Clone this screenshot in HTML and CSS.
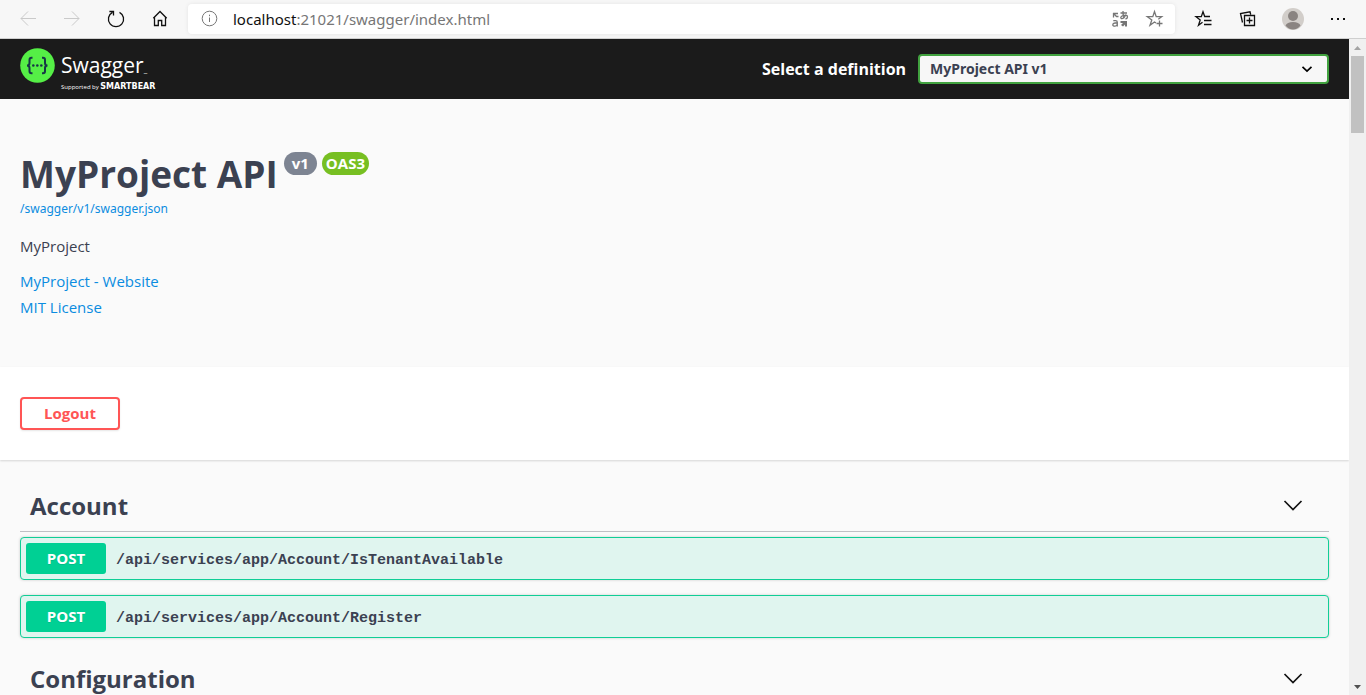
FILE: index.html
```html
<!DOCTYPE html>
<html lang="en">
<head>
<meta charset="utf-8">
<title>Swagger UI</title>
<link rel="stylesheet" href="styles.css">
</head>
<body>
<header class="browser">
  <nav class="nav-buttons" aria-label="Browser">
    <button class="tool tool-off" aria-label="Back"><svg width="20" height="20" viewBox="0 0 20 20"><path d="M18 9.500H3M10 2.500L3 9.500L10 16.500"/></svg></button>
    <button class="tool tool-off" aria-label="Forward"><svg width="20" height="20" viewBox="0 0 20 20"><path d="M2 9.500H17M10 2.500L17 9.500L10 16.500"/></svg></button>
    <button class="tool" aria-label="Refresh"><svg width="20" height="20" viewBox="0 0 20 20"><path class="thick" d="M13.500 3.300A7.600 7.600 0 1 1 6.500 3.300M3.400 2.500H7.500V6.500"/></svg></button>
    <button class="tool" aria-label="Home"><svg width="20" height="20" viewBox="0 0 20 20"><path class="thick" d="M4.500 8.500V16.500H8.300V11.500H11.700V16.500H15.500V8.500M3.300 9.300L10 2.500L16.700 9.300"/></svg></button>
  </nav>
  <div class="address">
    <svg class="gray" width="18" height="18" viewBox="0 0 18 18"><circle cx="9.500" cy="8.500" r="7.300"/><path d="M9.500 7.500V12M9.500 4.700V6.200"/></svg>
    <div class="url" role="textbox" aria-label="Address"><span class="host">localhost</span>:21021/swagger/index.html</div>
    <button class="tool gray" aria-label="Translate"><svg width="20" height="20" viewBox="0 0 20 20"><path class="thick" d="M3 4.500H8M3.500 4V8.500M4 5L6.500 7.500H8.500M3.300 11.700H5.500Q7.300 11.700 7.300 13.300V17.500M7.300 14H5Q2.800 14.200 2.800 15.700T5 17.200Q7 17 7.300 15M10.500 4H17M13 2Q12.800 6.500 14 9.500M15.800 5.500Q14 10 11.500 9.700Q9.800 8.500 12 7Q17.500 5 17.500 8Q17.500 9.500 15.500 10"/><path class="dots" d="M10.500 12H17V17.500H15V15.500L13 17.500L11 16L13 14H10.500Z"/></svg></button>
    <button class="tool gray" aria-label="Add to favorites"><svg width="20" height="20" viewBox="0 0 20 20"><path class="thick" d="M11 14L9.500 13L5 16.300L6.800 11L2.300 7.700H7.800L9.500 2.500L11.200 7.700H16.700L13.300 10.300M14.500 11.500V17.500M11.500 14.500H17.500"/></svg></button>
  </div>
  <div class="side-buttons">
    <button class="tool" aria-label="Favorites"><svg width="20" height="20" viewBox="0 0 20 20"><path class="thick" d="M8.500 13.300L4.500 16.300L6.200 11L2 7.700H7.300L9 2.800L10.700 7.500H16M10 11.500H17.500M10 15.500H17.500"/></svg></button>
    <button class="tool" aria-label="Collections"><svg width="20" height="20" viewBox="0 0 20 20"><path class="thick" d="M6.500 6.500H16.500V16.500H6.500ZM11.500 8.500V14.500M8.500 11.500H14.500M4.500 13.500L2.500 4.500L12 2.800L12.700 5.500"/></svg></button>
    <button class="tool profile" aria-label="Profile"><svg width="22" height="22" viewBox="0 0 22 22"><circle cx="11" cy="11" r="11" fill="#d2ceca"/><circle cx="11" cy="8" r="5" fill="#8a8481"/><path d="M3.500 17.500Q5 14 11 14T18.500 17.500Q15.500 21.500 11 21.500T3.500 17.500Z" fill="#8a8481"/></svg></button>
    <button class="tool" aria-label="Settings and more"><svg width="20" height="20" viewBox="0 0 20 20"><path class="dots" d="M3 9h2v2h-2zM9 9h2v2h-2zM15 9h2v2h-2z"/></svg></button>
  </div>
</header>
<div class="viewport">
  <div class="page">
    <header class="topbar">
      <a class="brand" href="#" aria-label="Swagger, supported by SmartBear">
        <svg class="brand-mark" width="35" height="35" viewBox="0 0 35 35"><circle cx="17.500" cy="17.500" r="17.300" fill="#55ef46"/><g fill="none" stroke="#173647" stroke-width="2"><path d="M12.500 9.800H11.500Q9.500 9.800 9.500 12V15Q9.500 17.500 7 17.500Q9.500 17.500 9.500 20V23Q9.500 25.200 11.500 25.200H12.500M22 9.800H23Q25 9.800 25 12V15Q25 17.500 27.500 17.500Q25 17.500 25 20V23Q25 25.200 23 25.200H22"/></g><g fill="#173647"><circle cx="13.300" cy="17.500" r="1.300"/><circle cx="17.300" cy="17.500" r="1.300"/><circle cx="21.300" cy="17.500" r="1.300"/></g></svg>
        <span class="brand-text"><span class="brand-name">Swagger<span class="tm">_</span></span><span class="brand-by">Supported by <b>SMARTBEAR</b></span></span>
      </a>
      <div class="definition">
        <label for="definition">Select a definition</label>
        <div class="select-box">
          <select id="definition"><option>MyProject API v1</option></select>
          <svg class="select-arrow" width="12" height="12" viewBox="0 0 12 12"><path d="M1.500 3.800L6 8L10.500 3.800"/></svg>
        </div>
      </div>
    </header>
    <section class="info">
      <div class="title-row"><h1>MyProject API</h1><span class="tag">v1</span><span class="tag tag-oas">OAS3</span></div>
      <a class="spec" href="#">/swagger/v1/swagger.json</a>
      <p class="description">MyProject</p>
      <a class="info-link" href="#">MyProject - Website</a>
      <a class="info-link" href="#">MIT License</a>
    </section>
    <section class="scheme"><button class="logout">Logout</button></section>
    <main class="operations">
      <section class="group">
        <h2><span>Account</span><button class="expand" aria-label="Collapse Account"><svg width="20" height="20" viewBox="0 0 20 20"><path d="M1.500 5L10 13.500L18.500 5"/></svg></button></h2>
        <div class="operation"><button class="method">POST</button><a class="path" href="#">/api/services/app/Account/IsTenantAvailable</a></div>
        <div class="operation"><button class="method">POST</button><a class="path" href="#">/api/services/app/Account/Register</a></div>
      </section>
      <section class="group">
        <h2><span>Configuration</span><button class="expand" aria-label="Collapse Configuration"><svg width="20" height="20" viewBox="0 0 20 20"><path d="M1.500 5L10 13.500L18.500 5"/></svg></button></h2>
      </section>
    </main>
  </div>
  <div class="scrollbar" aria-hidden="true">
    <svg width="17" height="17" viewBox="0 0 17 17"><path d="M5 11L8.500 7L12 11Z" fill="#a3a3a3"/></svg>
    <div class="track"><div class="thumb"></div></div>
    <svg width="17" height="17" viewBox="0 0 17 17"><path d="M5 7L8.500 11L12 7Z" fill="#505050"/></svg>
  </div>
</div>
</body>
</html>
```
FILE: styles.css
```css
* { box-sizing: border-box; }
body {
  margin: 0;
  height: 100vh;
  overflow: hidden;
  display: flex;
  flex-direction: column;
  font-family: "Open Sans", "Noto Sans", sans-serif;
  color: #3b4151;
  background: #fafafa;
}
button { font-family: inherit; cursor: pointer; }
a { text-decoration: none; }

.browser {
  flex: none;
  height: 39px;
  display: flex;
  align-items: center;
  background: #f7f7f7;
  border-bottom: 1px solid #cfcfcf;
}
.nav-buttons { display: flex; gap: 24px; padding: 0 18px; }
.tool {
  display: flex;
  padding: 0;
  border: 0;
  background: none;
  color: #101010;
}
.tool svg, .address svg { fill: none; stroke: currentColor; stroke-width: 1; }
.tool .thick { stroke-width: 1.3; }
.tool .dots { fill: currentColor; stroke: none; }
.tool.profile svg { stroke: none; }
.tool-off { color: #cacaca; }
.gray { color: #767676; }
.address {
  flex: 1;
  height: 30px;
  display: flex;
  align-items: center;
  gap: 15px;
  padding: 0 10px 0 12px;
  background: #fff;
  border-radius: 4px;
  box-shadow: 0 0 4px rgba(0, 0, 0, .08);
}
.url {
  flex: 1;
  font-family: "Noto Sans", sans-serif;
  font-size: 15px;
  line-height: 20px;
  color: #767676;
}
.host { color: #101010; }
.side-buttons { display: flex; align-items: center; gap: 24px; padding: 0 18px 0 19px; }

.viewport { flex: 1; min-height: 0; display: flex; }
.page { flex: 1; min-width: 0; overflow: hidden; }

.topbar {
  height: 60px;
  display: flex;
  align-items: center;
  justify-content: space-between;
  padding: 0 20px;
  background: #1b1b1b;
}
.brand { display: flex; align-items: flex-start; gap: 6px; color: #fff; }
.brand-text { display: flex; flex-direction: column; padding-top: 4px; }
.brand-name { font-size: 21px; font-weight: 400; line-height: 26px; }
.tm { font-size: 8px; }
.brand-by { font-size: 6px; line-height: 8px; }
.brand-by b { font: bold 8px/8px "DejaVu Sans", sans-serif; }
.definition { width: 567px; display: flex; align-items: center; gap: 12px; }
.definition label { font-size: 16px; font-weight: 700; color: #fff; white-space: nowrap; }
.select-box { position: relative; flex: 1; }
.select-box select {
  appearance: none;
  display: block;
  width: 100%;
  height: 30px;
  padding: 0 40px 2px 10px;
  border: 2px solid #41a23f;
  border-radius: 4px;
  background: #f7f7f7;
  color: #3b4151;
  font: bold 14px "Noto Sans", sans-serif;
}
.select-arrow {
  position: absolute;
  top: 9px;
  right: 16px;
  fill: none;
  stroke: #000;
  stroke-width: 1.7;
  pointer-events: none;
}

.info {
  display: flex;
  flex-direction: column;
  align-items: flex-start;
  padding: 50px 20px 47px;
}
.title-row { display: flex; align-items: flex-start; gap: 6px; }
h1 { margin: 0; font-size: 37px; line-height: 50px; }
.tag {
  margin-top: 3px;
  padding: 0 8px;
  border-radius: 12px;
  background: #7d8492;
  color: #fff;
  font-size: 15px;
  font-weight: 700;
  line-height: 23px;
}
.tag-oas { margin-left: -1px; padding: 0 4px; background: #77bf22; }
.spec { font-family: "Noto Sans", sans-serif; font-size: 12px; line-height: 20px; color: #0b8ce0; }
.description { margin: 14px 0 9px; font-size: 15px; line-height: 26px; }
.info-link { font-size: 15px; line-height: 26px; color: #0b8ce0; }

.scheme {
  padding: 30px 20px;
  background: #fff;
  box-shadow: 0 1px 2px rgba(0, 0, 0, .15);
}
.logout {
  display: block;
  width: 100px;
  height: 33px;
  padding: 0 0 2px;
  border: 2px solid #ff5555;
  border-radius: 4px;
  background: #fff;
  box-shadow: 0 1px 2px rgba(0, 0, 0, .1);
  color: #ff5555;
  font-size: 15px;
  font-weight: 700;
}

.operations { padding: 21px 20px 0; }
.group { margin-bottom: 16px; }
h2 {
  display: flex;
  align-items: center;
  justify-content: space-between;
  margin: 0 0 5px;
  padding: 5px 26px 5px 10px;
  border-bottom: 1px solid #bfc0c4;
  font-size: 24px;
  line-height: 40px;
}
.expand { display: flex; padding: 0; border: 0; background: none; }
.expand svg { fill: none; stroke: #111; stroke-width: 1.7; }
.operation {
  display: flex;
  align-items: center;
  gap: 10px;
  margin-bottom: 15px;
  padding: 5px;
  border: 1px solid #10ce96;
  border-radius: 4px;
  background: #e0f5ef;
  box-shadow: 0 0 3px rgba(0, 0, 0, .19);
}
.method {
  width: 80px;
  height: 31px;
  padding: 0 0 2px;
  border: 0;
  border-radius: 3px;
  background: #00d094;
  color: #fff;
  font-size: 15px;
  font-weight: 700;
  text-shadow: 0 1px 0 rgba(0, 0, 0, .1);
}
.path {
  padding-top: 5px;
  font: bold 15px/20px "Liberation Mono", monospace;
  color: #3b4151;
}

.scrollbar { width: 17px; display: flex; flex-direction: column; background: #f0f0f0; }
.track { flex: 1; padding: 0 2px; }
.thumb { height: 12.500%; max-height: 77px; background: #c1c1c1; }
```
